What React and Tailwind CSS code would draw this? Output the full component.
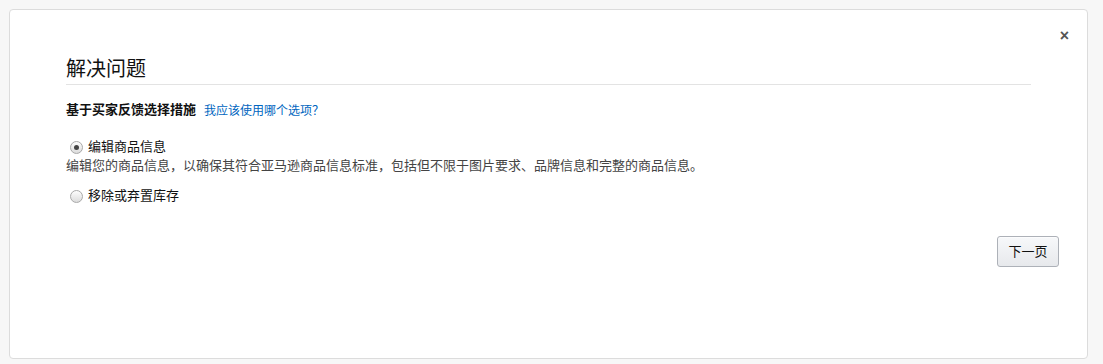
const font = { fontFamily: '"Liberation Sans", "Noto Sans CJK SC", sans-serif' };

function Radio({ checked }) {
  return (
    <span className="relative inline-flex h-[13px] w-[13px] shrink-0 items-center justify-center rounded-full border border-[#a9a9a9] bg-gradient-to-b from-[#fdfdfd] to-[#dcdcdc]">
      {checked && <span className="h-[5px] w-[5px] rounded-full bg-[#444]" />}
    </span>
  );
}

export default function App() {
  return (
    <div className="min-h-[364px] bg-[#f7f7f7] pb-[5px] pl-[9px] pr-[15px] pt-[9px]" style={font}>
      <div className="relative h-[350px] rounded-[4px] border border-[#dcdcdc] bg-white">
        {/* close */}
        <button className="absolute right-[18px] top-[18px] text-[16px] font-bold leading-none text-[#555]">
          ×
        </button>

        <div className="px-[56px] pt-[47px]">
          <h1 className="border-b border-[#e3e3e3] pb-[3px] text-[20px] leading-[24px] text-[#111]">解决问题</h1>

          <div className="mt-[16px] flex items-center gap-[8px] leading-[18px]">
            <span className="text-[13px] font-bold text-[#111]">基于买家反馈选择措施</span>
            <a className="text-[12px] text-[#0066c0]" style={{ fontFamily: '"Noto Sans CJK SC", sans-serif' }}>
              我应该使用哪个选项？
            </a>
          </div>

          <div className="mt-[19px]">
            <label className="ml-[4px] flex items-center gap-[5px] text-[13px] leading-[18px] text-[#111]">
              <Radio checked />
              编辑商品信息
            </label>
            <p className="text-[13px] leading-[19px] text-[#444]">
              编辑您的商品信息，以确保其符合亚马逊商品信息标准，包括但不限于图片要求、品牌信息和完整的商品信息。
            </p>
            <label className="ml-[4px] mt-[12px] flex items-center gap-[5px] text-[13px] leading-[18px] text-[#111]">
              <Radio />
              移除或弃置库存
            </label>
          </div>
        </div>

        <div className="mt-[31px] flex justify-end pr-[28px]">
          <button className="h-[31px] w-[62px] rounded-[3px] border border-[#adb1b8] bg-gradient-to-b from-[#f7f8fa] to-[#e7e9ec] text-[13px] text-[#111] shadow-[inset_0_1px_0_rgba(255,255,255,0.6)]">
            下一页
          </button>
        </div>
      </div>
    </div>
  );
}
